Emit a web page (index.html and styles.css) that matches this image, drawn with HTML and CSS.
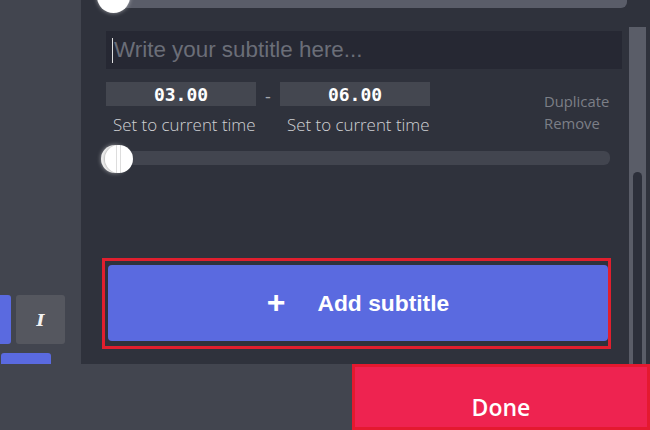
FILE: index.html
```html
<!DOCTYPE html>
<html>
<head>
<meta charset="utf-8">
<link rel="stylesheet" href="styles.css">
</head>
<body>
<div class="app">
  <div class="main">
    <div class="side">
      <div class="tools">
        <div class="tool tool-blue"></div>
        <div class="tool tool-gray"><span class="ital">I</span></div>
      </div>
      <div class="tool-bar"></div>
    </div>
    <div class="panel">
      <div class="content">
        <div class="track top-track"><span class="thumb thumb-top"></span></div>
        <div class="sub-input"><span class="caret"></span><span class="ph">Write your subtitle here...</span></div>
        <div class="times">
          <div class="time-col">
            <div class="time-box">03.00</div>
            <div class="set">Set to current time</div>
          </div>
          <div class="dash">-</div>
          <div class="time-col">
            <div class="time-box">06.00</div>
            <div class="set">Set to current time</div>
          </div>
          <div class="actions">
            <div>Duplicate</div>
            <div>Remove</div>
          </div>
        </div>
        <div class="track range"><span class="thumb t1"></span><span class="thumb t2"></span></div>
        <div class="add-wrap">
          <div class="add-btn"><span class="plus">+</span><span>Add subtitle</span></div>
        </div>
      </div>
      <div class="scroll"><div class="scroll-thumb"></div></div>
    </div>
  </div>
  <div class="bottom">
    <div class="done">Done</div>
  </div>
</div>
</body>
</html>
```
FILE: styles.css
```css
* { box-sizing: border-box; }
html, body { margin: 0; padding: 0; }
body { width: 650px; height: 430px; overflow: hidden; background: #2f323c; font-family: "Open Sans", sans-serif; }
.app { width: 650px; height: 430px; display: flex; flex-direction: column; }
.main { height: 364px; display: flex; }
.side { width: 81px; background: #42454f; display: flex; flex-direction: column; justify-content: flex-end; }
.tools { display: flex; gap: 5px; }
.tool { height: 49px; border-radius: 3px; }
.tool-blue { width: 11px; background: #5a6ae0; border-radius: 0 3px 3px 0; }
.tool-gray { width: 49px; background: #55575f; display: flex; align-items: center; justify-content: center; }
.ital { color: #f2f2f2; font-family: "DejaVu Serif", serif; font-style: italic; font-weight: bold; font-size: 17px; }
.tool-bar { width: 50px; height: 11px; margin: 9px 0 0 1px; background: #5a6ae0; border-radius: 3px 3px 0 0; }
.panel { flex: 1; display: flex; background: #2f323c; }
.content { width: 548px; display: flex; flex-direction: column; }
.track { position: relative; background: #42454f; }
.top-track { height: 8px; margin-left: 29px; margin-right: 2px; background: #5a5d69; border-radius: 0 0 6px 0; }
.thumb { position: absolute; width: 30px; height: 30px; border-radius: 50%; background: #fff; box-shadow: 0 0 4px rgba(255,255,255,0.5); }
.thumb-top { left: -13px; top: -20px; width: 33px; height: 33px; }
.sub-input { margin: 23px 7px 0 25px; height: 38px; background: #262833; display: flex; align-items: center; padding-left: 6px; }
.caret { width: 1px; height: 25px; background: #e0e0e0; margin-right: 1px; }
.ph { font-family: "Liberation Sans", sans-serif; font-size: 22.4px; color: #6b6e78; }
.times { display: flex; margin: 13px 0 0 25px; }
.time-col { width: 150px; display: flex; flex-direction: column; align-items: flex-start; }
.time-box { width: 150px; height: 24px; background: #444750; color: #fff; font-family: "DejaVu Sans Mono", monospace; font-weight: bold; font-size: 18px; display: flex; align-items: center; justify-content: center; }
.set { margin-top: 8px; padding-left: 7px; font-size: 16.9px; font-weight: 300; color: #d0d1d4; line-height: 22px; white-space: nowrap; }
.dash { width: 24px; text-align: center; color: #a4a6ad; font-size: 18px; line-height: 24px; margin-top: 2px; }
.actions { margin: 8px 0 0 114px; font-size: 14.8px; color: #7c7f87; line-height: 22px; }
.range { height: 14px; margin: 15px 19px 0 22px; border-radius: 6px; }
.range .thumb { width: 28px; height: 28px; top: -6px; }
.t1 { left: -2px; background: #ececec; }
.t2 { left: 2px; box-shadow: -1px 0 2px rgba(0,0,0,0.2); background: linear-gradient(90deg, #fff 0 11px, #ddd 11px 12px, #fff 12px 15px, #ddd 15px 16px, #fff 16px); }
.add-wrap { margin: 93px 18px 0 21px; border: 3px solid #e01f2e; padding: 4px 0 5px 3px; height: 91px; }
.add-btn { width: 500px; height: 76px; background: #5a6ae0; border-radius: 4px; display: flex; align-items: center; justify-content: center; gap: 32px; color: #fff; font-family: "Liberation Sans", sans-serif; font-weight: bold; font-size: 22.8px; }
.plus { font-size: 32px; font-weight: bold; margin-top: -2px; }
.scroll { width: 17px; margin-top: 27px; background: #5a5d68; display: flex; flex-direction: column; justify-content: flex-end; padding: 0 4px; }
.scroll-thumb { height: 192px; background: #2c2f3a; border-radius: 5px 5px 0 0; }
.bottom { height: 66px; background: #42454f; display: flex; justify-content: flex-end; }
.done { width: 298px; height: 66px; background: #ee2350; border: 3px solid #e4192f; color: #fff; font-size: 23px; font-weight: 600; display: flex; align-items: center; justify-content: center; padding-top: 19px; }
```
